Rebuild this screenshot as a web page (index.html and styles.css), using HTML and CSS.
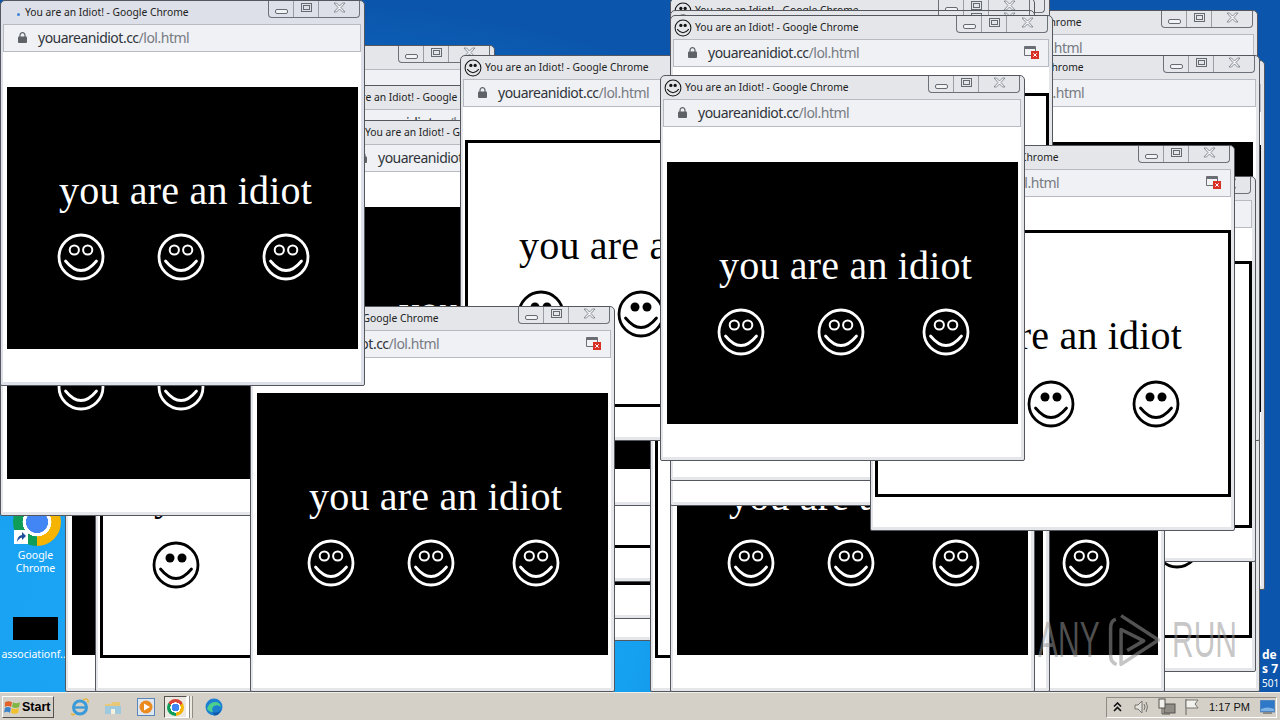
FILE: index.html
```html
<!DOCTYPE html>
<html lang="en">
  <head>
    <meta charset="UTF-8" />
    <title>You are an Idiot! - Google Chrome</title>
    <link rel="stylesheet" href="styles.css">
  </head>
  <body>
    <svg class="defs" width="0" height="0">
      <symbol id="face-open" viewBox="-25 -25 50 50">
        <circle r="22" fill="none" stroke="currentColor" stroke-width="2.8" />
        <circle cx="-6.7" cy="-7" r="4.6" fill="none" stroke="currentColor" stroke-width="2" />
        <circle cx="6.7" cy="-7" r="4.6" fill="none" stroke="currentColor" stroke-width="2" />
        <path d="M-15.5 4 Q0 23 15.5 4" fill="none" stroke="currentColor" stroke-width="2.8" stroke-linecap="round" />
      </symbol>
      <symbol id="face-solid" viewBox="-25 -25 50 50">
        <circle r="22" fill="none" stroke="currentColor" stroke-width="2.8" />
        <circle cx="-6" cy="-7" r="4.5" fill="currentColor" />
        <circle cx="6" cy="-7" r="4.5" fill="currentColor" />
        <path d="M-15.5 4 Q0 23 15.5 4" fill="none" stroke="currentColor" stroke-width="2.8" stroke-linecap="round" />
      </symbol>
    </svg>

    <div class="desktop">
      <main class="screen" id="screen">
        <div class="shortcut shortcut-chrome">
          <div class="chrome-logo"></div>
          <svg class="shortcut-arrow" viewBox="0 0 14 14">
            <rect width="14" height="14" fill="#fff" />
            <path d="M3 12 Q3 6 8 5 L8 2 L12 6 L8 10 L8 7.5 Q5 8 3 12Z" fill="#1c4f9c" />
          </svg>
          <span class="shortcut-name">Google<br />Chrome</span>
        </div>
        <div class="shortcut shortcut-file">
          <div class="file-thumb"></div>
          <span class="shortcut-name">associationf...</span>
        </div>
        <div class="os-note"><b>de</b><b>s 7</b><span>501</span></div>
      </main>

      <footer class="taskbar">
        <button class="start">
          <svg width="17" height="17" viewBox="0 0 18 17">
            <path d="M1 3 Q5 1 8.5 3 L7.5 8 Q4 6 1 8Z" fill="#e2622a" />
            <path d="M9.5 3 Q13 5 17 3 L16 8 Q12.5 10 8.5 8Z" fill="#7fb742" />
            <path d="M1 9 Q4 7 7.3 9 L6.3 14 Q3 12 0 14Z" fill="#3c83c9" />
            <path d="M8.3 9 Q12 11 15.8 9 L15 14 Q11 16 7.3 14Z" fill="#f0c02e" />
          </svg>
          Start
        </button>
        <div class="quick">
          <svg class="task-icon" viewBox="0 0 20 20">
            <circle cx="10" cy="10.5" r="6.5" fill="none" stroke="#3b9ad8" stroke-width="3" />
            <path d="M4 10.5 H16" stroke="#3b9ad8" stroke-width="2.4" />
            <path d="M2 16 Q1 19 5 17 M13 3 Q19 0 18 6" fill="none" stroke="#e8b53a" stroke-width="1.4" />
          </svg>
          <svg class="task-icon" viewBox="0 0 20 20">
            <path d="M2 7 H8 L9 5 H17 V17 H2Z" fill="#e7c878" />
            <rect x="2" y="9" width="16" height="8" fill="#9fc9df" />
            <rect x="8" y="12" width="4" height="5" fill="#f4f1df" />
          </svg>
          <svg class="task-icon" viewBox="0 0 20 20">
            <rect x="1.5" y="1.5" width="17" height="17" fill="#dfe7f2" stroke="#5c86b8" />
            <circle cx="10" cy="10" r="6.5" fill="#ea8a1f" />
            <path d="M8 6.5 L14 10 L8 13.5Z" fill="#fff" />
          </svg>
          <div class="task-active">
            <div class="chrome-logo chrome-logo-small"></div>
          </div>
          <svg class="task-icon" viewBox="0 0 20 20">
            <circle cx="10" cy="10" r="8.5" fill="#1c7fd0" />
            <path d="M3 12 Q5 5 11 5 Q16 5 17 10 Q14 7 10 9 Q7 11 9 15 Q5 15 3 12Z" fill="#4ccf8f" />
            <path d="M9 15 Q13 17 17 13 Q15 19 10 18.5Z" fill="#0f5aa8" />
          </svg>
        </div>
        <div class="tray">
          <svg class="tray-chevron" width="9" height="10" viewBox="0 0 9 10">
            <path d="M1 4.5 L4.5 1 L8 4.5 M1 9 L4.5 5.5 L8 9" fill="none" stroke="#111" stroke-width="1.6" />
          </svg>
          <svg class="tray-icon" viewBox="0 0 18 18">
            <path d="M2 7 H5 L9 3 V15 L5 11 H2Z" fill="#e5e3dd" stroke="#77756f" />
            <path d="M11 6 Q13 9 11 12 M13 4 Q16 9 13 14" fill="none" stroke="#77756f" />
          </svg>
          <svg class="tray-icon" viewBox="0 0 18 18">
            <rect x="6" y="6" width="11" height="9" fill="#8f8d86" stroke="#55534e" />
            <rect x="1" y="1" width="6" height="9" fill="#f4f2ec" stroke="#55534e" />
            <path d="M4 10 V16 H12" fill="none" stroke="#55534e" />
          </svg>
          <svg class="tray-icon" viewBox="0 0 18 18">
            <path d="M3 1 V17" stroke="#66645f" />
            <path d="M3 2 H15 L12 6 L15 10 H3Z" fill="#f4f2ec" stroke="#77756f" />
          </svg>
          <span class="clock">1:17 PM</span>
          <svg class="show-desktop" viewBox="0 0 15 15">
            <rect width="15" height="12" fill="#2f78c8" stroke="#6d93bd" />
            <path d="M1 9 Q7 6 14 9 V11 H1Z" fill="#7fb1e3" />
            <rect x="3" y="12" width="9" height="2" fill="#8a8a86" />
          </svg>
        </div>
      </footer>

      <div class="watermark">
        <span class="wm-any">ANY</span>
        <svg class="wm-play" width="54" height="60" viewBox="0 0 62 64">
          <path d="M9 8 Q3 10 3 18 V50 Q3 58 10 60 M15 4 L58 32 L15 60 V20 L41 33 L22 44" fill="none" stroke="currentColor" stroke-width="4" stroke-linejoin="round" />
        </svg>
        <span class="wm-run">RUN</span>
      </div>
    </div>

    <template id="win-tpl">
      <section class="win">
        <header class="titlebar">
          <svg class="tab-icon"><use href="#face-solid" /></svg>
          <span class="tab-title">You are an Idiot! - Google Chrome</span>
          <div class="winbtns">
            <span class="btn-min"><i></i></span>
            <span class="btn-max"><i></i></span>
            <span class="btn-close">
              <svg width="13" height="11" viewBox="0 0 13 11">
                <path d="M1 1 H3.5 L6.5 4 L9.5 1 H12 L8 5.5 L12 10 H9.5 L6.5 7 L3.5 10 H1 L5 5.5Z" fill="#eef0f3" stroke="#777c83" stroke-width=".8" />
              </svg>
            </span>
          </div>
        </header>
        <div class="addr">
          <svg class="lock" width="9" height="11" viewBox="0 0 9 11">
            <path d="M2 5 V3.2 A2.5 2.5 0 0 1 7 3.2 V5" fill="none" stroke="#5f6368" stroke-width="1.2" />
            <rect y="4.5" width="9" height="6.5" rx="1" fill="#5f6368" />
          </svg>
          <span class="url">youareanidiot.cc<em>/lol.html</em></span>
          <svg class="blocked" width="15" height="14" viewBox="0 0 15 14">
            <rect y="1" width="12" height="10" rx="1" fill="#6a6e74" />
            <rect x="1" y="4" width="10" height="6" fill="#f2f3f5" />
            <rect x="7" y="6" width="8" height="8" fill="#d93025" />
            <path d="M9.3 8.3 L12.7 11.7 M12.7 8.3 L9.3 11.7" stroke="#fff" />
          </svg>
        </div>
        <div class="page">
          <div class="box">
            <p class="shout">you are an idiot</p>
            <div class="faces">
              <svg class="face"><use /></svg>
              <svg class="face"><use /></svg>
              <svg class="face"><use /></svg>
            </div>
          </div>
        </div>
      </section>
    </template>

    <script src="script.js"></script>
  </body>
</html>
```

FILE: styles.css
```css
body {
  margin: 0;
  background-color: #0b57ad;
  font-family: "Noto Sans", sans-serif;
  overflow: hidden;
}

.defs {
  display: block;
  height: 0;
}

.desktop {
  position: relative;
  width: 1280px;
  height: 720px;
  display: flex;
  flex-direction: column;
  overflow: hidden;
}

.screen {
  position: relative;
  flex: 1;
  overflow: hidden;
  background: radial-gradient(ellipse 900px 620px at 260px 620px, #22a9f8 0%, #16a0f0 42%, #0d6cc6 78%, #0b56ac 100%);
}

/* desktop icons */
.shortcut {
  position: absolute;
  width: 70px;
  display: flex;
  flex-direction: column;
  align-items: center;
}

.shortcut-chrome {
  left: 2px;
  top: 498px;
}

.shortcut-file {
  left: 0;
  top: 617px;
}

.shortcut-arrow {
  position: absolute;
  left: 12px;
  top: 32px;
  width: 14px;
  height: 14px;
}

.shortcut-name {
  color: #fff;
  font-size: 10.5px;
  line-height: 13px;
  text-align: center;
  white-space: nowrap;
}

.shortcut-chrome .shortcut-name {
  margin-top: 3px;
  margin-left: -3px;
}

.shortcut-file .shortcut-name {
  margin-top: 8px;
}

.file-thumb {
  width: 45px;
  height: 23px;
  background-color: #000;
}

.chrome-logo {
  width: 48px;
  height: 48px;
  border-radius: 50%;
  background:
    radial-gradient(circle, #4285f4 0 32%, #fff 33% 42%, transparent 43%),
    conic-gradient(from 300deg, #db4437 0 120deg, #f4b400 120deg 240deg, #0f9d58 240deg 360deg);
}

.chrome-logo-small {
  width: 17px;
  height: 17px;
}

.os-note {
  position: absolute;
  left: 1262px;
  top: 648px;
  display: flex;
  flex-direction: column;
  color: #fff;
  font-size: 10px;
  line-height: 14px;
  white-space: nowrap;
}

.os-note b {
  font-size: 12px;
}

/* browser popups */
.win {
  position: absolute;
  box-sizing: border-box;
  display: flex;
  flex-direction: column;
  width: 365px;
  height: 386px;
  padding: 0 3px 3px 2px;
  border: 1px solid #54585e;
  border-radius: 5px 5px 2px 2px;
  background-color: #e4e6ea;
}

.win-first {
  background-color: #dde0e8;
}

.titlebar {
  flex: none;
  height: 23px;
  display: flex;
  align-items: flex-start;
}

.tab-icon {
  flex: none;
  width: 18px;
  height: 18px;
  margin: 3px 3px 0 1px;
  color: #111;
}

/* the frontmost popup had not loaded its favicon yet, only a dot of the spinner */
.win-first .tab-icon {
  display: none;
}

.win-first .titlebar::before {
  content: "";
  flex: none;
  width: 3px;
  height: 3px;
  margin: 12px 5px 0 14px;
  border-radius: 50%;
  background-color: #3b82d6;
}

.tab-title {
  margin-top: 4px;
  font-size: 10.3px;
  line-height: 15px;
  color: #222;
  white-space: nowrap;
}

.winbtns {
  display: flex;
  flex: none;
  height: 16px;
  margin-left: auto;
  margin-right: 1px;
  border: 1px solid #6c7178;
  border-top: none;
  border-radius: 0 0 4px 4px;
}

.winbtns span {
  display: flex;
  align-items: center;
  justify-content: center;
  border-left: 1px solid #9a9ea4;
}

.btn-min {
  width: 24px;
  border-left: none !important;
}

.btn-min i {
  width: 11px;
  height: 3px;
  margin-top: 5px;
  border: 1px solid #666b72;
  border-radius: 2px;
  background-color: #f2f3f5;
}

.btn-max {
  width: 24px;
}

.btn-max i {
  width: 5px;
  height: 3px;
  margin-top: -3px;
  border: 1px solid #666b72;
  outline: 1px solid #666b72;
  outline-offset: 1px;
}

.btn-close {
  width: 40px;
}

.btn-close svg {
  margin-top: -3px;
}

.addr {
  flex: none;
  box-sizing: border-box;
  height: 28px;
  display: flex;
  align-items: center;
  padding: 0 9px 2px 14px;
  border: 1px solid #b7bbc1;
  background-color: #eff1f5;
}

.lock {
  flex: none;
}

.url {
  margin-left: 11px;
  font-size: 14px;
  letter-spacing: -0.5px;
  color: #30343a;
  white-space: nowrap;
}

.url em {
  font-style: normal;
  color: #777b82;
}

.blocked {
  display: none;
  flex: none;
  margin-left: auto;
}

.win-blocked .blocked {
  display: block;
}

.page {
  flex: 1;
  min-height: 0;
  padding: 35px 3px 0 4px;
  background-color: #fff;
}

.box {
  box-sizing: border-box;
  height: 262px;
  padding: 81px 0 0 52px;
  overflow: hidden;
  background-color: #000;
  color: #fff;
}

.win-white .box {
  height: 267px;
  margin: -2px -3px 0 -2px;
  padding: 80px 0 0 51px;
  border: 3px solid #000;
  background-color: #fff;
  color: #000;
}

.shout {
  width: 253px;
  height: 46px;
  margin: 0;
  overflow: hidden;
  font-family: "Liberation Serif", serif;
  font-size: 40px;
  line-height: 46px;
  letter-spacing: 0.2px;
  white-space: nowrap;
}

.faces {
  display: flex;
  gap: 50px;
  margin-top: 18px;
  margin-left: -3px;
}

.win-white .faces {
  margin-top: 20px;
}

.face {
  width: 50px;
  height: 50px;
  flex: none;
}

.face:last-child {
  margin-left: 5px;
}

/* the one popup that was stretched by hand */
.win-wide .page {
  padding-top: 28px;
}

/* taskbar */
.taskbar {
  flex: none;
  box-sizing: border-box;
  height: 28px;
  display: flex;
  align-items: center;
  padding: 1px 3px 0 2px;
  border-top: 1px solid #f1efe9;
  background-color: #d4d0c8;
}

.start {
  display: flex;
  align-items: center;
  gap: 1px;
  width: 52px;
  height: 22px;
  padding: 0 0 0 1px;
  border: 1px solid;
  border-color: #fff #55524d #55524d #fff;
  background-color: #d4d0c8;
  font-family: "Liberation Sans", sans-serif;
  font-size: 12.5px;
  font-weight: bold;
  color: #000;
}

.quick {
  display: flex;
  align-items: center;
  margin-left: 16px;
}

.task-icon {
  width: 20px;
  height: 20px;
  margin-right: 13px;
}

.task-active {
  box-sizing: border-box;
  display: flex;
  align-items: center;
  justify-content: center;
  width: 23px;
  height: 22px;
  margin: 0 17px 0 -5px;
  border: 1px solid;
  border-color: #55524d #fff #fff #55524d;
  background-color: #ece9e3;
  box-shadow: 2px 0 #fff, 3px 0 #8f8c85, 5px 0 #ece9e3, 6px 0 #8f8c85;
}

.tray {
  box-sizing: border-box;
  display: flex;
  align-items: center;
  width: 171px;
  height: 21px;
  margin-left: auto;
  padding-left: 6px;
  border: 1px solid;
  border-color: #8f8c85 #fff #fff #8f8c85;
}

.tray-chevron {
  flex: none;
  margin-right: 11px;
}

.tray-icon {
  width: 18px;
  height: 18px;
  margin-right: 7px;
}

.clock {
  margin-left: 1px;
  font-family: "Liberation Sans", sans-serif;
  font-size: 11px;
  white-space: nowrap;
  color: #111;
}

.show-desktop {
  width: 15px;
  height: 15px;
  margin-left: auto;
  margin-right: 1px;
}

/* sandbox watermark */
.watermark {
  position: absolute;
  left: 1038px;
  top: 608px;
  display: flex;
  align-items: center;
  color: rgba(150, 150, 150, 0.55);
}

.wm-any,
.wm-run {
  display: block;
  font-family: "Liberation Sans", sans-serif;
  font-size: 50px;
  line-height: 64px;
  transform-origin: left center;
  transform: scaleX(0.6);
}

.wm-any {
  width: 70px;
}

.wm-run {
  width: 66px;
  margin-left: 10px;
}

.wm-play {
  flex: none;
}
```

FILE: script.js
```js
// back to front, x/y are the top left corner of each popup
// text lists what can still be seen of it, the rest lies under other popups
const popups = [
  { x: 130, y: 45, kind: "black" },
  { x: 295, y: 255, kind: "white" },
  { x: 295, y: 233, kind: "white" },
  { x: 295, y: 196, kind: "white" },
  { x: 310, y: 85, kind: "black", text: "title url" },
  { x: 340, y: 120, kind: "black", text: "title url shout" },
  { x: 65, y: 306, kind: "black" },
  { x: 95, y: 306, kind: "white", text: "shout" },
  { x: 0, y: 130, kind: "black" },
  { x: 900, y: 60, kind: "white", height: 530 },
  { x: 895, y: 306, kind: "white" },
  { x: 893, y: 10, kind: "black", text: "title url" },
  { x: 895, y: 55, kind: "black", text: "title url" },
  { x: 891, y: 286, kind: "white" },
  { x: 891, y: 176, kind: "white" },
  { x: 650, y: 306, kind: "white" },
  { x: 685, y: -5, kind: "white" },
  { x: 670, y: -2, kind: "white", text: "title" },
  { x: 670, y: 10, kind: "white" },
  { x: 800, y: 306, kind: "black" },
  { x: 685, y: 306, kind: "black" },
  { x: 670, y: 306, kind: "black", text: "shout" },
  { x: 670, y: 120, kind: "white" },
  { x: 460, y: 55, kind: "white", text: "title url shout" },
  { x: 670, y: 15, kind: "white", width: 383, height: 466, wide: true, blocked: true, text: "title url" },
  { x: 250, y: 306, kind: "black", blocked: true, text: "title url shout" },
  { x: 870, y: 145, kind: "white", blocked: true, text: "title url shout" },
  { x: 660, y: 75, kind: "black", text: "title url shout" },
  { x: 0, y: 0, kind: "black", first: true, text: "title url shout" },
]

const screen = document.getElementById("screen")
const tpl = document.getElementById("win-tpl")

popups.forEach((p) => {
  const win = tpl.content.firstElementChild.cloneNode(true)
  const text = p.text || ""
  win.classList.add("win-" + p.kind)
  win.classList.toggle("win-blocked", !!p.blocked)
  win.classList.toggle("win-wide", !!p.wide)
  win.classList.toggle("win-first", !!p.first)

  win.style.left = p.x + "px"
  win.style.top = p.y + "px"
  if (p.width) win.style.width = p.width + "px"
  if (p.height) win.style.height = p.height + "px"

  const symbol = p.kind === "black" ? "#face-open" : "#face-solid"
  win.querySelectorAll(".face use").forEach((u) => u.setAttribute("href", symbol))

  if (!text.includes("title")) win.querySelector(".tab-title").remove()
  if (!text.includes("url")) win.querySelector(".url").remove()
  if (!text.includes("shout")) win.querySelector(".shout").textContent = ""

  screen.appendChild(win)
})
```
